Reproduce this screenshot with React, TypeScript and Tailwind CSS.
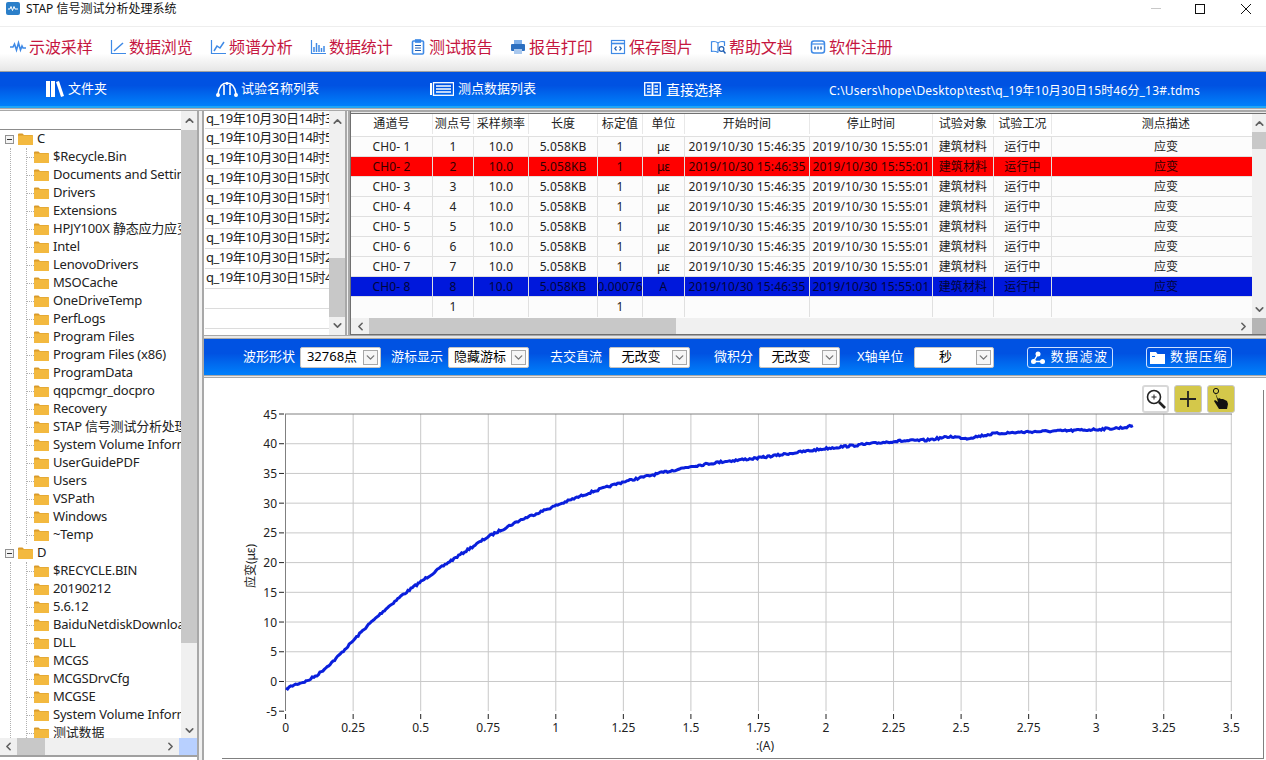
import { useMemo } from "react";
import { ChevronDown, ChevronLeft, ChevronRight, ChevronUp } from "lucide-react";

const cols = [82, 41, 55, 69, 45, 42, 125, 123, 61, 58, 228];
const headers = ["通道号", "测点号", "采样频率", "长度", "标定值", "单位", "开始时间", "停止时间", "试验对象", "试验工况", "测点描述"];
const gridClass = "grid grid-cols-[82px_41px_55px_69px_45px_42px_125px_123px_61px_58px_228px]";

const files = ["14时35分", "14时50分", "14时55分", "15时05分", "15时15分", "15时20分", "15时25分", "15时28分", "15时46分"];
const cDirs = ["$Recycle.Bin", "Documents and Settings", "Drivers", "Extensions", "HPJY100X 静态应力应变测试", "Intel", "LenovoDrivers", "MSOCache", "OneDriveTemp", "PerfLogs", "Program Files", "Program Files (x86)", "ProgramData", "qqpcmgr_docpro", "Recovery", "STAP 信号测试分析处理系统", "System Volume Information", "UserGuidePDF", "Users", "VSPath", "Windows", "~Temp"];
const dDirs = ["$RECYCLE.BIN", "20190212", "5.6.12", "BaiduNetdiskDownload", "DLL", "MCGS", "MCGSDrvCfg", "MCGSE", "System Volume Information", "测试数据"];

const curveKnots: [number, number][] = [
  [0, -1.3], [0.03, -0.6], [0.08, 0.1], [0.12, 1.2], [0.18, 3.6], [0.25, 6.9], [0.3, 9.3], [0.37, 12.2], [0.43, 14.5], [0.5, 16.8],
  [0.6, 20], [0.75, 24.4], [0.87, 27.2], [1, 29.6], [1.12, 31.7], [1.25, 33.6], [1.38, 35], [1.5, 36.2], [1.62, 37], [1.75, 37.6],
  [1.87, 38.4], [2, 39.2], [2.12, 39.8], [2.25, 40.4], [2.37, 40.6], [2.46, 41.2], [2.52, 40.9], [2.62, 41.7], [2.75, 42], [2.9, 42.2], [3, 42.4], [3.1, 42.7], [3.14, 43.1],
];

function Scroll({ dir }: { dir: "up" | "down" | "left" | "right" }) {
  const props = { size: 13, strokeWidth: 3, className: "text-[#606060]" };
  if (dir === "up") return <ChevronUp {...props} />;
  if (dir === "down") return <ChevronDown {...props} />;
  if (dir === "left") return <ChevronLeft {...props} />;
  return <ChevronRight {...props} />;
}

function ToolIcon({ name }: { name: string }) {
  const common = { width: 16, height: 16, viewBox: "0 0 16 16", fill: "none", stroke: "#3f8ae6", strokeWidth: 1.2 };
  switch (name) {
    case "wave":
      return <svg {...common} strokeWidth={1.6}><path d="M0 8h3l1.5-3 2 6 2-7 2 7 1.5-4 1 2h3" /></svg>;
    case "line":
      return <svg {...common}><path d="M1.5 1v13.5H16" /><path d="M4 12l9-8" strokeWidth={1.5} /></svg>;
    case "trend":
      return <svg {...common}><path d="M1.5 1v13.5H16" /><path d="M4 12l3-5 3 2 4-6" strokeWidth={1.5} /></svg>;
    case "bars":
      return <svg {...common}><path d="M1.5 1v13.5H16" /><path d="M4 13V8M6.5 13V4M9 13V6M11.5 13V9M14 13V7" strokeWidth={1.5} /></svg>;
    case "report":
      return <svg {...common}><rect x="2.5" y="2" width="11" height="13" rx="1" strokeWidth={1.6} /><rect x="5.5" y="0.8" width="5" height="2.4" fill="#3f8ae6" /><path d="M5 6.5h6M5 9h6M5 11.5h6" stroke="#1f5fb4" /></svg>;
    case "print":
      return <svg {...common} stroke="none"><rect x="4" y="1" width="8" height="4" fill="#7fb0ea" /><rect x="1" y="5" width="14" height="7" rx="1" fill="#2c6fc0" /><rect x="4" y="10" width="8" height="5" fill="#a9c8ee" /></svg>;
    case "window":
      return <svg {...common}><rect x="1.5" y="1.5" width="13" height="13" /><path d="M1.5 4.5h13" strokeWidth={1.6} /><path d="M6.5 7.5L4.8 9.5l1.7 2M9.5 7.5l1.7 2-1.7 2" stroke="#1f5fb4" /></svg>;
    case "help":
      return <svg {...common}><path d="M8 4C6.5 2.6 4 2.2 1.5 2.8v9.6C4 12 6 12.2 8 13.5" /><path d="M8 4c1.5-1.4 4-1.8 6.5-1.2V7" /><path d="M8 4v9.5" /><circle cx="11.5" cy="10" r="2.4" stroke="#1f5fb4" /><path d="M13.3 11.8L15.5 14.5" stroke="#1f5fb4" strokeWidth={1.5} /></svg>;
    default:
      return <svg {...common}><rect x="1.5" y="2" width="13" height="12" rx="2.5" strokeWidth={1.5} /><path d="M2 5h12" /><path d="M5 7.5v3M8 7.5v3M11 7.5v3" stroke="#1f5fb4" strokeWidth={1.4} /></svg>;
  }
}

function Tool({ icon, label }: { icon: string; label: string }) {
  return (
    <div className="flex w-[100px] shrink-0 items-center gap-[3px]">
      <ToolIcon name={icon} />
      <span className="text-[16px] leading-none tracking-[-0.1px] text-[#c5163f]">{label}</span>
    </div>
  );
}

function Folder() {
  return (
    <svg width="15" height="12" viewBox="0 0 15 12" className="shrink-0">
      <path d="M0 1.5Q0 .5 1 .5h3.5l1.5 1.5h8q1 0 1 1V11q0 1-1 1H1q-1 0-1-1z" fill="#d99a2b" />
      <rect x="0" y="2.6" width="15" height="9.4" rx="1" fill="#f3b93f" />
    </svg>
  );
}

function Minus() {
  return (
    <span className="flex h-[9px] w-[9px] shrink-0 items-center justify-center border border-[#919191] bg-[#f4f4f4]">
      <span className="h-px w-[5px] bg-[#333]" />
    </span>
  );
}

function DirGroup({ name, dirs }: { name: string; dirs: string[] }) {
  return (
    <div>
      <div className="flex h-[18px] items-center pl-[5px]">
        <Minus />
        <span className="ml-[4px]"><Folder /></span>
        <span className="ml-[4px] text-[13px] text-[#222]">{name}</span>
      </div>
      <div className="ml-[10px] border-l border-dotted border-[#b0b0b0] pl-[15px]">
        <div className="border-l border-dotted border-[#b0b0b0]">
          {dirs.map((d) => (
            <div key={d} className="flex h-[18px] items-center whitespace-nowrap">
              <span className="w-[7px] shrink-0 border-t border-dotted border-[#b0b0b0]" />
              <Folder />
              <span className="ml-[4px] text-[13px] tracking-[-0.2px] text-[#222]">{d}</span>
            </div>
          ))}
        </div>
      </div>
    </div>
  );
}

function Cell({ children, last }: { children?: React.ReactNode; last?: boolean }) {
  return (
    <div className={`flex items-center justify-center overflow-hidden whitespace-nowrap border-b border-[#e0e0e0] ${last ? "" : "border-r"}`}>
      {children}
    </div>
  );
}

function Row({ n, tone, scale, unit }: { n: number; tone: string; scale: string; unit: string }) {
  return (
    <div className={`${gridClass} h-[20px] ${tone}`}>
      <Cell>CH0- {n}</Cell>
      <Cell>{n}</Cell>
      <Cell>10.0</Cell>
      <Cell>5.058KB</Cell>
      <Cell><span className="shrink-0">{scale}</span></Cell>
      <Cell>{unit}</Cell>
      <Cell>2019/10/30 15:46:35</Cell>
      <Cell>2019/10/30 15:55:01</Cell>
      <Cell>建筑材料</Cell>
      <Cell>运行中</Cell>
      <Cell last>应变</Cell>
    </div>
  );
}

function Select({ value, className }: { value: string; className: string }) {
  return (
    <div className={`flex h-[21px] shrink-0 items-center rounded-[2px] border border-[#c4c4c4] bg-white pr-[2px] text-[13px] text-black ${className}`}>
      <span className="flex-1 text-center whitespace-nowrap">{value}</span>
      <span className="flex h-[15px] w-[15px] shrink-0 items-center justify-center border border-[#a8a8a8] bg-[#f6f6f6]">
        <ChevronDown size={13} strokeWidth={2.5} className="text-[#777]" />
      </span>
    </div>
  );
}

function Chart() {
  const toX = (v: number) => 286 + v * 270.2;
  const toY = (v: number) => 681.3 - v * 5.94;
  const path = useMemo(() => {
    let seed = 7;
    const rnd = () => {
      seed = (seed * 16807) % 2147483647;
      return seed / 2147483647 - 0.5;
    };
    const pts: string[] = [];
    for (let k = 0; k < curveKnots.length - 1; k++) {
      const [x0, y0] = curveKnots[k];
      const [x1, y1] = curveKnots[k + 1];
      const steps = Math.max(2, Math.round((x1 - x0) * 270 / 1.5));
      for (let s = 0; s < steps; s++) {
        const t = s / steps;
        pts.push(`${(toX(x0 + (x1 - x0) * t)).toFixed(1)},${(toY(y0 + (y1 - y0) * t) + rnd() * 2).toFixed(1)}`);
      }
    }
    return "M" + pts.join("L");
  }, []);
  const xs = ["0", "0.25", "0.5", "0.75", "1", "1.25", "1.5", "1.75", "2", "2.25", "2.5", "2.75", "3", "3.25", "3.5"];
  const ys = [45, 40, 35, 30, 25, 20, 15, 10, 5, 0, -5];
  return (
    <svg width="1062" height="382" viewBox="204 378 1062 382" className="block font-['Noto_Sans','Noto_Sans_CJK_SC',sans-serif]">
      {xs.map((l, i) => {
        const x = 285.6 + i * 67.55;
        return (
          <g key={l}>
            {i > 0 && <line x1={x} x2={x} y1={414} y2={711} stroke="#c8c8c8" />}
            <line x1={x} x2={x} y1={714} y2={719} stroke="#222" />
            <text x={x} y={732} textAnchor="middle" fontSize="12" fill="#222">{l}</text>
          </g>
        );
      })}
      {ys.map((v, i) => {
        const y = 414 + i * 29.72;
        return (
          <g key={v}>
            {i > 0 && i < 10 && <line x1={286} x2={1232} y1={y} y2={y} stroke="#c8c8c8" />}
            <line x1={279} x2={284} y1={y} y2={y} stroke="#222" />
            <text x={277} y={y + 4.5} textAnchor="end" fontSize="12" fill="#222">{v}</text>
          </g>
        );
      })}
      <line x1={285.5} x2={285.5} y1={414} y2={711} stroke="#808080" />
      <line x1={285} x2={1232} y1={414} y2={414} stroke="#808080" />
      <path d={path} fill="none" stroke="#0a1fdc" strokeWidth="3" />
      <text x={765} y={750} textAnchor="middle" fontSize="12" fill="#222">:(A)</text>
      <text transform="translate(255 566) rotate(-90)" textAnchor="middle" fontSize="12" fill="#222">应变(με)</text>
      <line x1={222} x2={1264} y1={758.5} y2={758.5} stroke="#808080" />
      <line x1={1263.5} x2={1263.5} y1={390} y2={759} stroke="#808080" />
    </svg>
  );
}

export default function App() {
  return (
    <div className="flex h-[760px] w-[1266px] flex-col overflow-hidden bg-white font-['Noto_Sans','Noto_Sans_CJK_SC',sans-serif] text-[#222]">
      {/* title bar */}
      <div className="flex h-[26px] shrink-0 items-center bg-white pb-[9px] pl-[6px]">
        <svg width="14" height="13" viewBox="0 0 14 13">
          <rect width="14" height="13" rx="2" fill="#2b7fc9" />
          <path d="M2 7h2l1-2.5 1.5 4 1.5-4 1 2.5h3" fill="none" stroke="#fff" />
        </svg>
        <span className="ml-[6px] text-[12px] leading-none text-[#111]">STAP 信号测试分析处理系统</span>
        <span className="ml-auto h-px w-[10px] bg-[#c8c8c8]" />
        <span className="ml-[34px] h-[10px] w-[10px] border border-[#111]" />
        <svg width="12" height="12" viewBox="0 0 12 12" className="ml-[35px] mr-[14px]" stroke="#111">
          <path d="M1 1l10 10M11 1L1 11" />
        </svg>
      </div>

      {/* toolbar */}
      <div className="flex h-[46px] shrink-0 items-center border-t border-b border-t-[#eeeeee] border-b-[#a0a0a0] bg-gradient-to-b from-white from-60% to-[#e6e6e6] pb-[4px] pl-[10px]">
        <Tool icon="wave" label="示波采样" />
        <Tool icon="line" label="数据浏览" />
        <Tool icon="trend" label="频谱分析" />
        <Tool icon="bars" label="数据统计" />
        <Tool icon="report" label="测试报告" />
        <Tool icon="print" label="报告打印" />
        <Tool icon="window" label="保存图片" />
        <Tool icon="help" label="帮助文档" />
        <Tool icon="key" label="软件注册" />
      </div>

      {/* nav bar */}
      <div className="flex h-[36px] shrink-0 items-center border-b-[2px] border-[#1fa5f7] bg-gradient-to-b from-[#0052e2] from-40% to-[#0080fb] text-white">
        <div className="ml-[46px] flex w-[61px] shrink-0 items-center gap-[3px] text-[13px]">
          <svg width="19" height="18" viewBox="0 0 19 18" fill="#fff" className="shrink-0">
            <rect x="0" y="1" width="4" height="16" />
            <rect x="5" y="1" width="4" height="16" />
            <path d="M10 2l3-1 5 15-3 1z" />
          </svg>
          <span>文件夹</span>
        </div>
        <div className="ml-[109px] flex w-[104px] shrink-0 items-center gap-[3px] text-[13px]">
          <svg width="22" height="16" viewBox="0 0 22 16" fill="none" stroke="#fff" strokeWidth="1.6" className="shrink-0">
            <path d="M2 13C3 6 6 2 11 2s8 4 9 11" />
            <path d="M8 4v10M14 4v10M11 1v3" />
            <circle cx="2" cy="14" r="1.2" fill="#fff" />
            <circle cx="20" cy="14" r="1.2" fill="#fff" />
          </svg>
          <span>试验名称列表</span>
        </div>
        <div className="ml-[110px] flex w-[106px] shrink-0 items-center gap-[4px] text-[13px]">
          <svg width="24" height="14" viewBox="0 0 24 14" fill="none" stroke="#fff" strokeWidth="1.3" className="shrink-0">
            <rect x="0" y="1" width="2" height="12" fill="#fff" stroke="none" />
            <rect x="3.5" y="0.7" width="20" height="12.6" />
            <path d="M6 4h15M6 7h15M6 10h15" />
          </svg>
          <span>测点数据列表</span>
        </div>
        <div className="ml-[108px] flex w-[79px] shrink-0 items-center gap-[5px] text-[14px]">
          <svg width="17" height="14" viewBox="0 0 17 14" fill="none" stroke="#fff" strokeWidth="1.3" className="shrink-0">
            <rect x="0.7" y="0.7" width="15.6" height="12.6" />
            <path d="M8.5 1v12" strokeWidth="1.8" />
            <path d="M3 4h3.5M3 7h3.5M3 10h3.5M10.5 4H14M10.5 7H14M10.5 10H14" />
          </svg>
          <span>直接选择</span>
        </div>
        <span className="ml-[106px] whitespace-nowrap pt-[4px] text-[12px] tracking-[0.17px]">C:\Users\hope\Desktop\test\q_19年10月30日15时46分_13#.tdms</span>
      </div>

      {/* horizontal splitter */}
      <div className="h-[3px] shrink-0 border-y border-[#a8a8a8] bg-[#e8e8e8]" />

      <div className="flex min-h-0 flex-1">
        {/* folder tree */}
        <div className="flex w-[197px] shrink-0 flex-col">
          <div className="flex min-h-0 flex-1">
            <div className="w-[181px] shrink-0 overflow-hidden">
              <div className="h-[19px] border-b border-[#8c8c8c]" />
              <DirGroup name="C" dirs={cDirs} />
              <DirGroup name="D" dirs={dDirs} />
            </div>
            <div className="flex w-[16px] shrink-0 flex-col bg-[#f0f0f0]">
              <div className="flex h-[19px] shrink-0 items-center justify-center"><Scroll dir="up" /></div>
              <div className="h-[513px] shrink-0 bg-[#c8c8c8]" />
              <div className="mt-auto flex h-[16px] shrink-0 items-center justify-center"><Scroll dir="down" /></div>
            </div>
          </div>
          <div className="flex h-[17px] shrink-0 items-center bg-[#f0f0f0]">
            <div className="flex w-[17px] shrink-0 justify-center"><Scroll dir="left" /></div>
            <div className="h-full w-[28px] shrink-0 bg-[#c8c8c8]" />
            <div className="ml-auto flex w-[17px] shrink-0 justify-center"><Scroll dir="right" /></div>
            <div className="h-full w-[18px] shrink-0 bg-[#b8d0ff]" />
          </div>
          <div className="h-[5px] shrink-0 border-t-[2px] border-[#a0a0a0]" />
        </div>

        {/* vertical splitter */}
        <div className="w-[7px] shrink-0 border-x-[2px] border-[#a8a8a8] bg-[#f0f0f0]" />

        <div className="flex min-w-0 flex-1 flex-col">
          <div className="flex h-[224px] shrink-0">
            {/* test list */}
            <div className="flex w-[141px] shrink-0 pl-px">
              <div className="w-[124px] shrink-0 overflow-hidden">
                {files.map((f, i) => (
                  <div key={f} className={`flex items-center overflow-hidden whitespace-nowrap border-b border-[#dcdcdc] pl-px pb-[2px] text-[13px] tracking-[-0.45px] ${i === 0 ? "h-[18px]" : "h-[20px]"}`}>
                    q_19年10月30日{f}
                  </div>
                ))}
                <div className="h-[20px] border-b border-[#dcdcdc]" />
                <div className="h-[20px] border-b border-[#dcdcdc]" />
              </div>
              <div className="flex w-[16px] shrink-0 flex-col bg-[#f0f0f0] pb-[2px]">
                <div className="flex h-[20px] shrink-0 items-center justify-center"><Scroll dir="up" /></div>
                <div className="mt-[127px] h-[59px] shrink-0 bg-[#c8c8c8]" />
                <div className="mt-auto flex h-[16px] shrink-0 items-center justify-center"><Scroll dir="down" /></div>
              </div>
            </div>

            {/* vertical splitter */}
            <div className="w-[5px] shrink-0 border-x-[2px] border-[#a8a8a8] bg-[#f0f0f0]" />

            {/* channel table */}
            <div className="flex min-w-0 flex-1 flex-col border-l border-[#707070]">
              <div className="h-[3px] shrink-0 border-t border-b border-t-[#a8a8a8] border-b-[#707070] bg-[#e8e8e8]" />
              <div className="flex h-[204px] shrink-0">
                <div className="w-[901px] shrink-0 overflow-hidden bg-[#fcfcfc] text-[12px] tracking-[0.12px]">
                  <div className={`${gridClass} h-[23px] bg-white pb-[2px] border-b border-[#e0e0e0]`}>
                    {headers.map((h, i) => (
                      <div key={h} className={`flex items-center justify-center whitespace-nowrap ${i < cols.length - 1 ? "border-r border-[#e8e8e8]" : ""}`}>
                        {h}
                      </div>
                    ))}
                  </div>
                  <Row n={1} tone="" scale="1" unit="με" />
                  <Row n={2} tone="bg-[#ff0000] text-[#300000]" scale="1" unit="με" />
                  <Row n={3} tone="" scale="1" unit="με" />
                  <Row n={4} tone="" scale="1" unit="με" />
                  <Row n={5} tone="" scale="1" unit="με" />
                  <Row n={6} tone="" scale="1" unit="με" />
                  <Row n={7} tone="" scale="1" unit="με" />
                  <Row n={8} tone="bg-[#0018dc] text-[#00053a]" scale="0.00076" unit="A" />
                  <div className={`${gridClass} h-[20px]`}>
                    {cols.map((_, i) => (
                      <div key={i} className={`flex items-center justify-center ${i < cols.length - 1 ? "border-r border-[#e0e0e0]" : ""}`}>
                        {i === 1 || i === 4 ? "1" : ""}
                      </div>
                    ))}
                  </div>
                </div>
                <div className="flex w-[14px] shrink-0 flex-col bg-[#f0f0f0]">
                  <div className="flex h-[18px] shrink-0 items-center justify-center"><Scroll dir="up" /></div>
                  <div className="h-[17px] shrink-0 bg-[#c8c8c8]" />
                  <div className="mt-auto flex h-[18px] shrink-0 items-center justify-center"><Scroll dir="down" /></div>
                </div>
              </div>
              <div className="flex h-[16px] shrink-0 items-center bg-[#f0f0f0]">
                <div className="flex w-[18px] shrink-0 justify-center"><Scroll dir="left" /></div>
                <div className="h-full w-[307px] shrink-0 bg-[#c8c8c8]" />
                <div className="ml-auto flex w-[18px] shrink-0 justify-center"><Scroll dir="right" /></div>
                <div className="h-full w-[14px] shrink-0 bg-[#b5b5b5]" />
              </div>
              <div className="h-px shrink-0 bg-[#707070]" />
            </div>
          </div>

          {/* horizontal splitter */}
          <div className="h-[4px] shrink-0 border-y border-[#a8a8a8] bg-[#e8e8e8]" />

          {/* options bar */}
          <div className="flex h-[36px] shrink-0 items-center bg-gradient-to-b from-[#0052e2] from-40% to-[#0080fb] text-[13px] text-white">
            <span className="ml-[39px] w-[52px] shrink-0">波形形状</span>
            <Select value="32768点" className="ml-[5px] w-[81px]" />
            <span className="ml-[10px] w-[52px] shrink-0">游标显示</span>
            <Select value="隐藏游标" className="ml-[5px] w-[81px]" />
            <span className="ml-[21px] w-[52px] shrink-0">去交直流</span>
            <Select value="无改变" className="ml-[7px] w-[81px]" />
            <span className="ml-[24px] w-[39px] shrink-0">微积分</span>
            <Select value="无改变" className="ml-[6px] w-[81px]" />
            <span className="ml-[17px] w-[48px] shrink-0 whitespace-nowrap">X轴单位</span>
            <Select value="秒" className="ml-[9px] w-[80px]" />
            <div className="ml-[33px] flex h-[21px] w-[86px] shrink-0 items-center justify-center gap-[5px] rounded-[3px] border border-[#cfe0ff] tracking-[1.5px]">
              <svg width="14" height="13" viewBox="0 0 14 13" fill="#fff" className="shrink-0">
                <circle cx="7" cy="3" r="2.5" />
                <circle cx="2.5" cy="10.5" r="2.5" />
                <circle cx="11.5" cy="10.5" r="2.5" />
                <path d="M7 3L2.5 10.5h9" fill="none" stroke="#fff" strokeWidth="1.4" />
              </svg>
              <span>数据滤波</span>
            </div>
            <div className="ml-[33px] flex h-[21px] w-[86px] shrink-0 items-center justify-center gap-[5px] rounded-[3px] border border-[#cfe0ff] tracking-[1.5px]">
              <svg width="15" height="13" viewBox="0 0 15 13" fill="#fff" className="shrink-0">
                <path d="M0 1h6l1.5 2H15v10H0z" />
                <rect x="2" y="5" width="3" height="1" fill="#0066ee" />
              </svg>
              <span>数据压缩</span>
            </div>
          </div>
          <div className="h-[3px] shrink-0 border-y border-[#a8a8a8] bg-[#e8e8e8]" />

          {/* chart */}
          <div className="relative min-h-0 flex-1">
            <Chart />
            <div className="absolute left-[938px] top-[7px] flex gap-[5px]">
              <div className="flex h-[28px] w-[27px] items-center justify-center rounded-[3px] border-2 border-[#d8d8d8] bg-white">
                <svg width="22" height="22" viewBox="0 0 22 22" fill="none" stroke="#222">
                  <circle cx="9" cy="9" r="6.5" strokeWidth="1.6" />
                  <path d="M6.5 9h5M9 6.5v5" />
                  <path d="M14 14l6 6" strokeWidth="2.6" />
                </svg>
              </div>
              <div className="flex h-[28px] w-[28px] items-center justify-center rounded-[3px] border border-[#c8c8c8] bg-[#d4c84a]">
                <svg width="18" height="18" viewBox="0 0 18 18" stroke="#222" strokeWidth="1.8">
                  <path d="M9 1v16M1 9h16" />
                </svg>
              </div>
              <div className="flex h-[28px] w-[28px] items-center justify-center rounded-[3px] border border-[#c8c8c8] bg-[#d4c84a]">
                <svg width="20" height="24" viewBox="0 0 20 24">
                  <circle cx="5" cy="4" r="2.6" fill="none" stroke="#111" />
                  <path d="M4 5l3 7 1-1 2 1 2 0 2 1 2 1 1 3-1 5H8L3 14l1-1 3 2z" fill="#111" />
                </svg>
              </div>
            </div>
          </div>
        </div>
      </div>
    </div>
  );
}
